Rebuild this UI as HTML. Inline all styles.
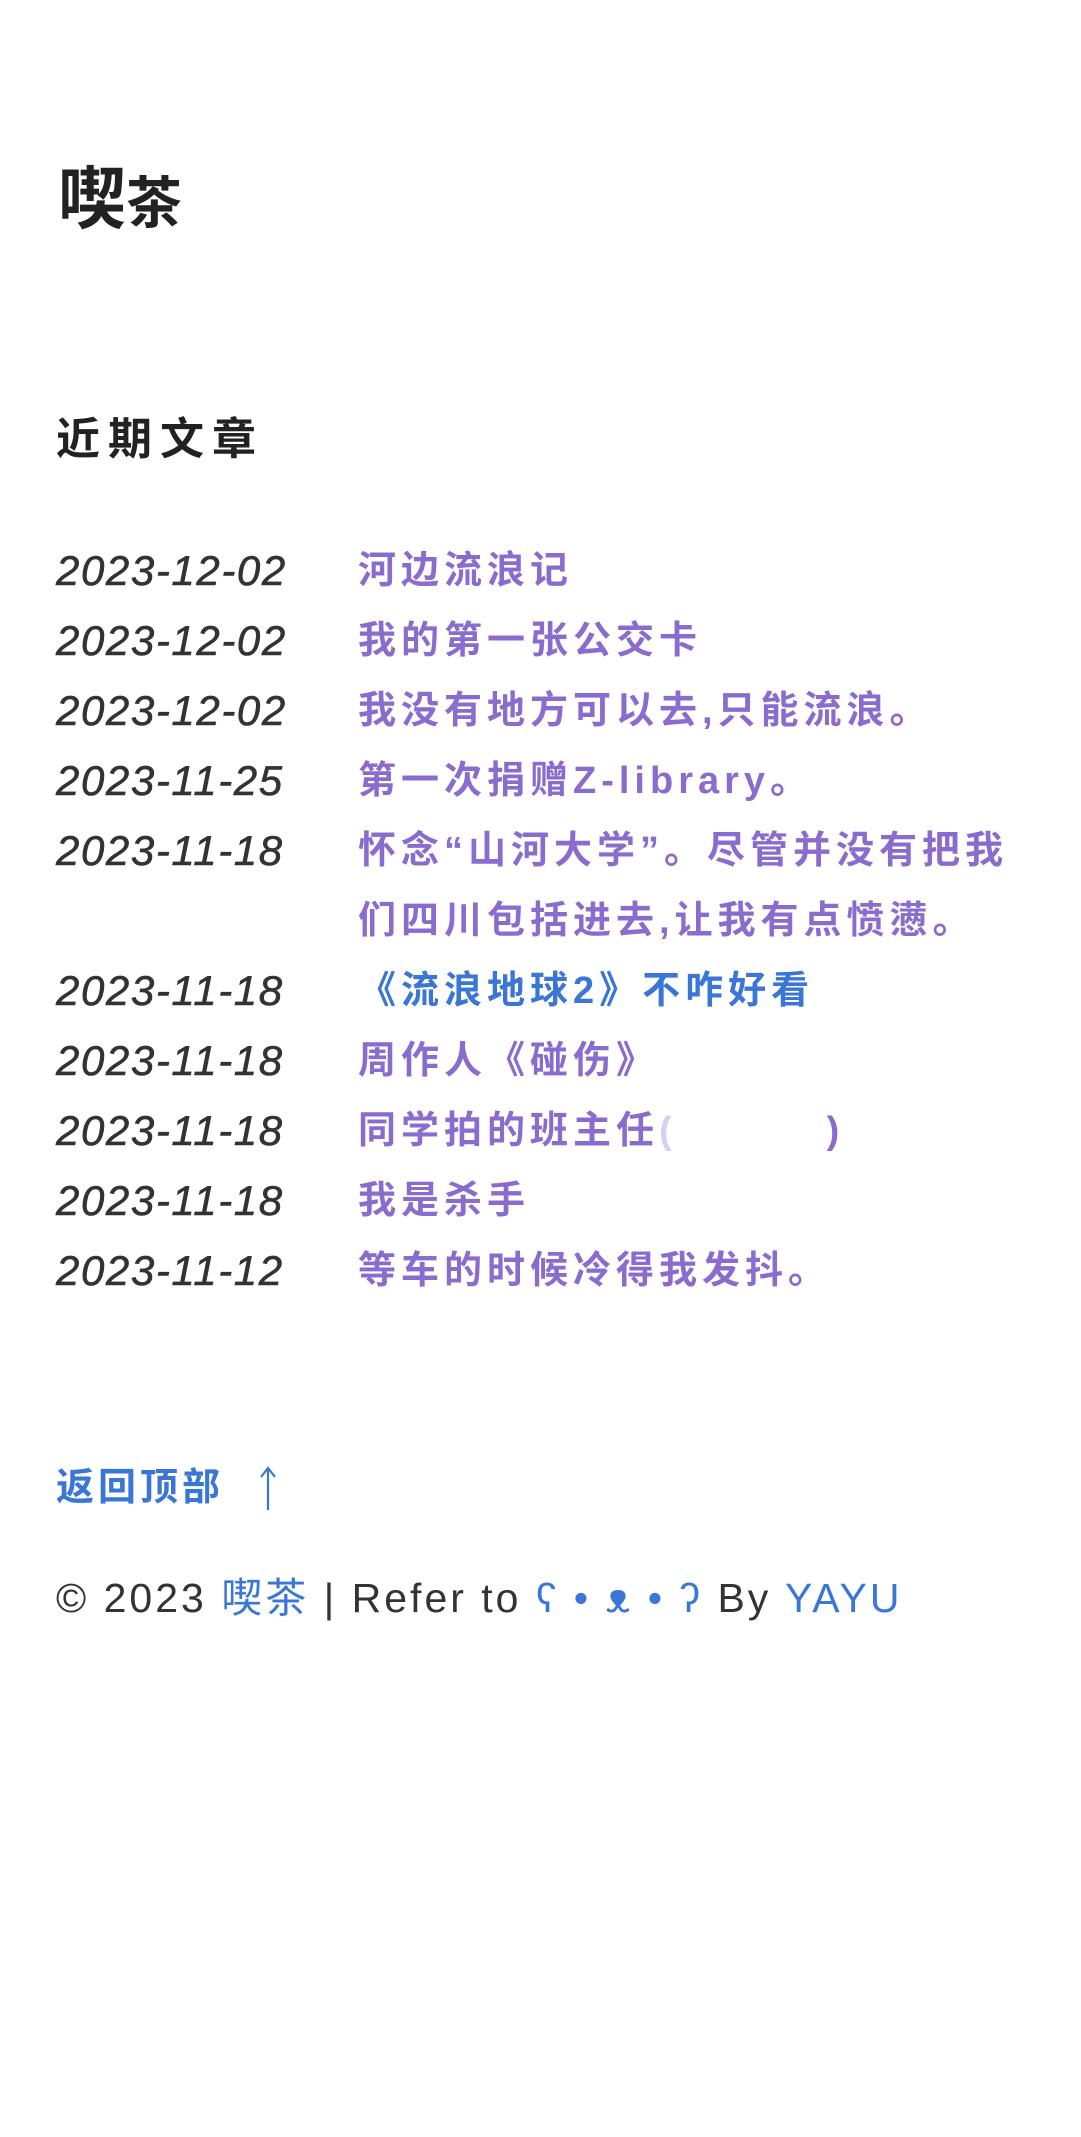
<!DOCTYPE html>
<html><head><meta charset="utf-8">
<style>
html,body{margin:0;padding:0;background:#fff;}
body{width:1081px;height:2137px;position:relative;overflow:hidden;font-family:"Liberation Sans","Noto Sans CJK SC",sans-serif;}
.abs{position:absolute;white-space:nowrap;}
.t1{left:58px;top:150px;font-weight:bold;color:#222;line-height:100px;}
.h2{left:56px;top:410px;font-size:44px;font-weight:bold;color:#222;letter-spacing:8px;line-height:60px;}
.date{left:56px;font-size:42px;font-style:italic;color:#333;line-height:50px;letter-spacing:1.6px;-webkit-text-stroke:0.6px #333;}
.ttl{left:358px;font-size:38px;font-weight:bold;color:#8a6ccf;letter-spacing:5px;line-height:50px;}
.blue{color:#3a76d6;}
.back{left:56px;top:1463px;font-size:38px;font-weight:bold;color:#3a76d6;letter-spacing:4px;line-height:50px;}
.foot{left:56px;top:1570px;font-size:41px;color:#333;line-height:56px;letter-spacing:3px;}
</style></head><body>
<div class="abs t1"><span style="font-size:68px">喫</span><span style="font-size:56px">茶</span></div>
<div class="abs h2">近期文章</div>

<div class="abs date" style="top:546px">2023-12-02</div><div class="abs ttl" style="top:546px">河边流浪记</div>
<div class="abs date" style="top:616px">2023-12-02</div><div class="abs ttl" style="top:616px">我的第一张公交卡</div>
<div class="abs date" style="top:686px">2023-12-02</div><div class="abs ttl" style="top:686px">我没有地方可以去,只能流浪。</div>
<div class="abs date" style="top:756px">2023-11-25</div><div class="abs ttl" style="top:756px">第一次捐赠Z-library。</div>
<div class="abs date" style="top:826px">2023-11-18</div><div class="abs ttl" style="top:826px">怀念“山河大学”。尽管并没有把我</div>
<div class="abs ttl" style="top:896px">们四川包括进去,让我有点愤懑。</div>
<div class="abs date" style="top:966px">2023-11-18</div><div class="abs ttl blue" style="top:966px">《流浪地球2》不咋好看</div>
<div class="abs date" style="top:1036px">2023-11-18</div><div class="abs ttl" style="top:1036px">周作人《碰伤》</div>
<div class="abs date" style="top:1106px">2023-11-18</div><div class="abs ttl" style="top:1106px">同学拍的班主任<span style="color:#d8d0f0">(</span><span style="display:inline-block;width:150px"></span><span>)</span></div>
<div class="abs date" style="top:1176px">2023-11-18</div><div class="abs ttl" style="top:1176px">我是杀手</div>
<div class="abs date" style="top:1246px">2023-11-12</div><div class="abs ttl" style="top:1246px">等车的时候冷得我发抖。</div>

<div class="abs back">返回顶部</div>
<svg class="abs" style="left:258px;top:1464px" width="20" height="50" viewBox="0 0 20 50"><path d="M10 4 V46 M3 13 L10 4 L17 13" fill="none" stroke="#3a76d6" stroke-width="2.2"/></svg>
<div class="abs foot">© 2023 <span class="blue">喫茶</span> | Refer to <span class="blue">ʕ • ᴥ • ʔ</span> By <span class="blue">YAYU</span></div>
</body></html>
